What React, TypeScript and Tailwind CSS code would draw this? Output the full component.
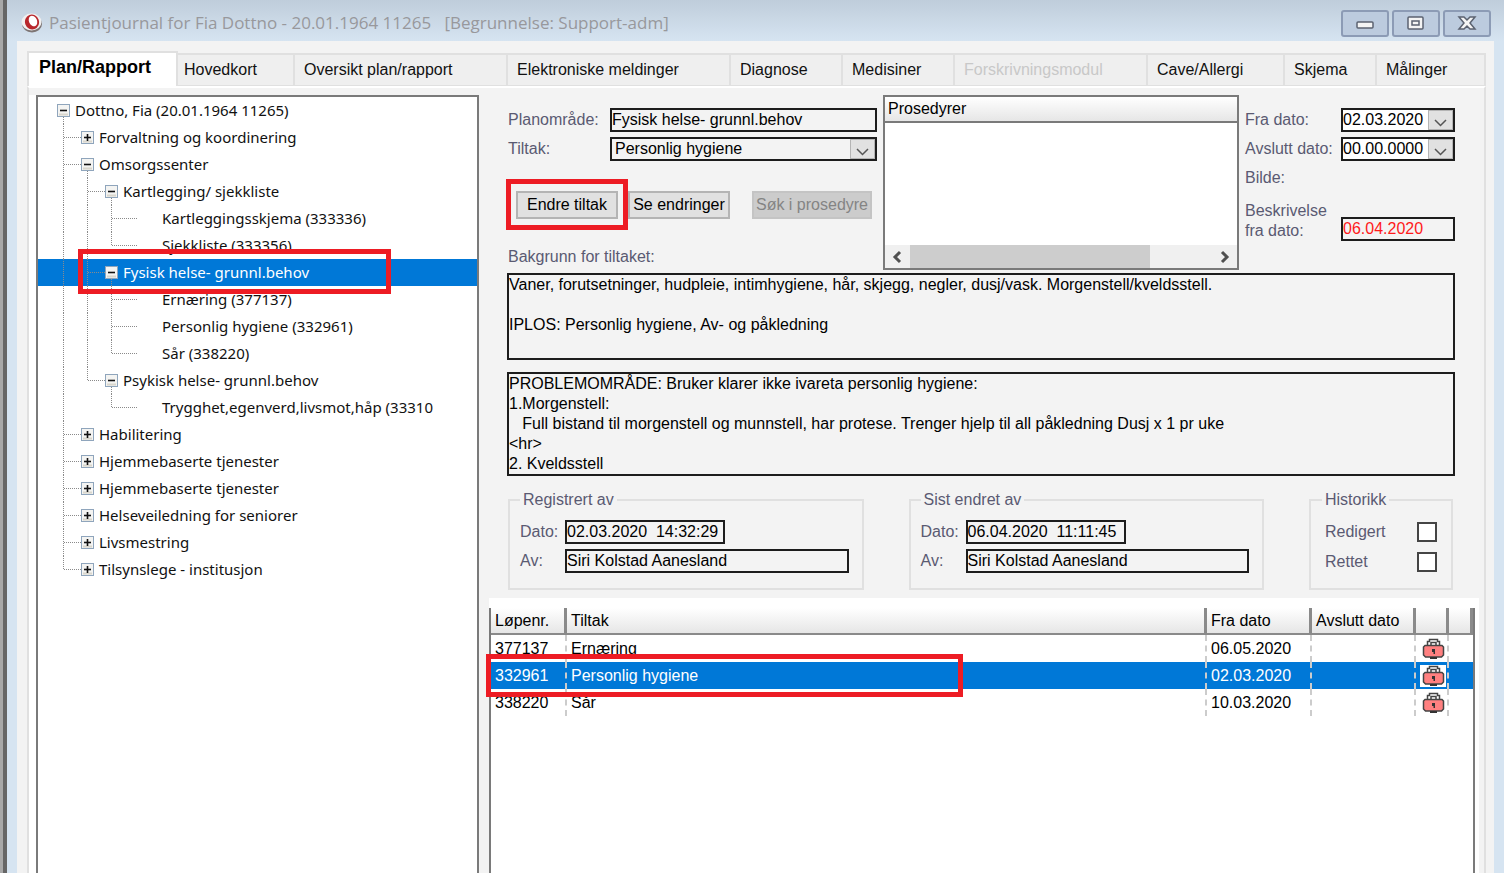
import React from "react";

type Guide = "line" | "tee" | "last" | "blank";

type Node = {
  label: string;
  guides: Guide[];
  state: "open" | "closed" | "leaf";
  selected?: boolean;
};

const TREE: Node[] = [
  { label: "Dottno, Fia (20.01.1964 11265)", guides: [], state: "open" },
  { label: "Forvaltning og koordinering", guides: ["tee"], state: "closed" },
  { label: "Omsorgssenter", guides: ["tee"], state: "open" },
  { label: "Kartlegging/ sjekkliste", guides: ["line", "tee"], state: "open" },
  { label: "Kartleggingsskjema (333336)", guides: ["line", "line", "tee"], state: "leaf" },
  { label: "Sjekkliste (333356)", guides: ["line", "line", "last"], state: "leaf" },
  { label: "Fysisk helse- grunnl.behov", guides: ["line", "tee"], state: "open", selected: true },
  { label: "Ernæring (377137)", guides: ["line", "line", "tee"], state: "leaf" },
  { label: "Personlig hygiene (332961)", guides: ["line", "line", "tee"], state: "leaf" },
  { label: "Sår (338220)", guides: ["line", "line", "last"], state: "leaf" },
  { label: "Psykisk helse- grunnl.behov", guides: ["line", "last"], state: "open" },
  { label: "Trygghet,egenverd,livsmot,håp (33310", guides: ["line", "blank", "last"], state: "leaf" },
  { label: "Habilitering", guides: ["tee"], state: "closed" },
  { label: "Hjemmebaserte tjenester", guides: ["tee"], state: "closed" },
  { label: "Hjemmebaserte tjenester", guides: ["tee"], state: "closed" },
  { label: "Helseveiledning for seniorer", guides: ["tee"], state: "closed" },
  { label: "Livsmestring", guides: ["tee"], state: "closed" },
  { label: "Tilsynslege - institusjon", guides: ["last"], state: "closed" },
];

const TABS = [
  { label: "Hovedkort", size: "basis-[117px] pl-[6px]" },
  { label: "Oversikt plan/rapport", size: "basis-[213px] pl-[9px]" },
  { label: "Elektroniske meldinger", size: "basis-[223px] pl-[9px]" },
  { label: "Diagnose", size: "basis-[112px] pl-[9px]" },
  { label: "Medisiner", size: "basis-[112px] pl-[9px]" },
  { label: "Forskrivningsmodul", size: "basis-[193px] pl-[9px]", disabled: true },
  { label: "Cave/Allergi", size: "basis-[137px] pl-[9px]" },
  { label: "Skjema", size: "basis-[92px] pl-[9px]" },
  { label: "Målinger", size: "basis-[109px] pl-[9px]" },
];

const ROWS = [
  { nr: "377137", tiltak: "Ernæring", fra: "06.05.2020" },
  { nr: "332961", tiltak: "Personlig hygiene", fra: "02.03.2020", selected: true },
  { nr: "338220", tiltak: "Sår", fra: "10.03.2020" },
];

const BACKGROUND = `Vaner, forutsetninger, hudpleie, intimhygiene, hår, skjegg, negler, dusj/vask. Morgenstell/kveldsstell.

IPLOS: Personlig hygiene, Av- og påkledning`;

const PROBLEM = `PROBLEMOMRÅDE: Bruker klarer ikke ivareta personlig hygiene:
1.Morgenstell:
   Full bistand til morgenstell og munnstell, har protese. Trenger hjelp til all påkledning Dusj x 1 pr uke
<hr>
2. Kveldsstell`;

const FIELD = "block h-6 border-2 border-[#1c1c1c] text-black outline-none";
const LABEL = "text-[#5a5a72]";

function GuideCell({ kind, long }: { kind: Guide; long: boolean }) {
  return (
    <svg width="24" height="27" className="shrink-0 overflow-visible" stroke="#8a8a8a" strokeDasharray="1 1">
      {(kind === "line" || kind === "tee") && <path d="M12.5 0V27" />}
      {kind === "last" && <path d="M12.5 0V14" />}
      {(kind === "tee" || kind === "last") && <path d={long ? "M13 13.5H38" : "M13 13.5H30"} />}
    </svg>
  );
}

function Toggle({ open }: { open: boolean }) {
  return (
    <button aria-label={open ? "Lukk" : "Åpne"} className="h-[27px] w-6 shrink-0">
      <svg width="24" height="27">
        {open && <path d="M12.5 20V27" stroke="#8a8a8a" strokeDasharray="1 1" />}
        <rect x="6.5" y="7.5" width="12" height="12" fill="#f4f4f2" stroke="#8fa5bc" />
        <path d="M8 17.5H17" stroke="#d9d6cd" strokeWidth="2" />
        <path d="M9 13.5H16" stroke="#111" strokeWidth="1.6" />
        {!open && <path d="M12.5 10V17" stroke="#111" strokeWidth="1.6" />}
      </svg>
    </button>
  );
}

function TreeRow({ node }: { node: Node }) {
  const leaf = node.state === "leaf";
  return (
    <li
      className={`relative flex h-[27px] items-center pl-[13px] ${
        node.selected ? "bg-[#0078d7] text-white" : "text-[#111]"
      }`}
    >
      {node.guides.map((g, i) => (
        <GuideCell key={i} kind={g} long={leaf} />
      ))}
      {!leaf && <Toggle open={node.state === "open"} />}
      <span className={`whitespace-nowrap ${leaf ? "pl-[39px]" : ""}`}>{node.label}</span>
      {node.selected && (
        <div className="absolute -top-[10px] left-[40px] z-10 h-[45px] w-[313px] border-5 border-[#ed1c24]" />
      )}
    </li>
  );
}

function Chevron() {
  return (
    <span className="pointer-events-none absolute inset-y-[2px] right-[2px] flex w-[25px] items-center justify-center border border-[#b4b4b4] bg-[#e1e1e1] pt-[5px]">
      <svg width="13" height="8" fill="none" stroke="#555" strokeWidth="1.5">
        <path d="M1 1L6.5 6.5L12 1" />
      </svg>
    </span>
  );
}

function DateSelect({ id, value }: { id: string; value: string }) {
  return (
    <div className="relative">
      <select id={id} className={`${FIELD} w-full appearance-none bg-white leading-5`}>
        <option>{value}</option>
      </select>
      <Chevron />
    </div>
  );
}

function WindowButton({ label, children }: { label: string; children: React.ReactNode }) {
  return (
    <button
      aria-label={label}
      className="flex h-[27px] w-12 items-center justify-center rounded-[3px] border-2 border-[#8c9bb5] bg-[#bccbde]"
    >
      <svg width="20" height="16" fill="#f4f4f4" stroke="#5b6270" strokeWidth="1.5">
        {children}
      </svg>
    </button>
  );
}

function Lock() {
  return (
    <svg width="26" height="22" viewBox="0 0 26 22" className="bg-white">
      <path d="M7.5 8V3.500H9.500V1.500H17.500V3.500H19.500V8" fill="#fff" stroke="#444" strokeWidth="1.5" />
      <path d="M11 8V4.500H16V8" fill="#fff" stroke="#444" strokeWidth="1.5" />
      <path d="M5 7.500H22L23.500 9V17L21.500 19H5.500L3.500 17V9Z" fill="#ff8080" stroke="#444" strokeWidth="1.5" />
      <path d="M10 20H17" stroke="#333" strokeWidth="2" />
      <path d="M12 11H15V16H13.500V14H12Z" fill="#333" />
    </svg>
  );
}

type SignedByProps = {
  title: string;
  id: string;
  date: string;
  name: string;
};

function SignedBy({ title, id, date, name }: SignedByProps) {
  return (
    <fieldset className="h-[100px] min-w-0 flex-1 border-2 border-[#e0e0e0] pl-[10px]">
      <legend className={`px-[3px] leading-5 ${LABEL}`}>{title}</legend>
      <div className="grid grid-cols-[45px_1fr] gap-y-[5px] pt-[10px] pr-[13px]">
        <label htmlFor={`${id}-dato`} className={`leading-6 ${LABEL}`}>Dato:</label>
        <input id={`${id}-dato`} readOnly value={date} className={`${FIELD} w-[160px]`} />
        <label htmlFor={`${id}-av`} className={`leading-6 ${LABEL}`}>Av:</label>
        <input id={`${id}-av`} readOnly value={name} className={`${FIELD} w-full`} />
      </div>
    </fieldset>
  );
}

const HEAD = "border-r-[3px] border-b-2 border-[#8a8a8a] pl-1 text-left font-normal bg-linear-to-b from-white to-[#e6e6e6]";
const CELL = "border-r-2 border-dashed border-[#cccccc] pl-1";

export default function App() {
  return (
    <div className="flex h-screen overflow-hidden bg-[#d6e4f1] font-['Liberation_Sans',Arial,sans-serif] text-base">
      <div className="w-[7px] shrink-0 border-r-4 border-[#666] bg-[#a8a8a8]" />
      <div className="flex min-w-0 flex-1 flex-col">
        <header className="flex h-[41px] shrink-0 items-center bg-linear-to-b from-[#bfcddb] to-[#d6e4f1] pt-[5px] pr-[13px] pl-[14px]">
          <svg width="22" height="20" viewBox="0 0 22 20">
            <ellipse cx="11" cy="11" rx="10" ry="8.500" fill="#7d7574" />
            <ellipse cx="10.500" cy="9" rx="10" ry="8.500" fill="#f1efef" />
            <ellipse cx="11" cy="9" rx="7" ry="7.500" fill="#b8262b" transform="rotate(-20 11 9)" />
            <ellipse cx="12" cy="8" rx="4" ry="5.500" fill="#fff" transform="rotate(-25 12 8)" />
          </svg>
          <h1 className="flex-1 pl-[6px] font-['Open_Sans','Noto_Sans',sans-serif] text-[17px] whitespace-pre text-[#98989c]">
            {"Pasientjournal for Fia Dottno - 20.01.1964 11265   [Begrunnelse: Support-adm]"}
          </h1>
          <div className="flex gap-[3px]">
            <WindowButton label="Minimer">
              <rect x="2" y="7" width="16" height="6" rx="1" />
            </WindowButton>
            <WindowButton label="Maksimer">
              <rect x="2" y="2" width="15" height="12" rx="1" />
              <rect x="6" y="6" width="7" height="4" />
            </WindowButton>
            <WindowButton label="Lukk">
              <path d="M2 2H7L10 5L13 2H18L13 8L18 14H13L10 11L7 14H2L7 8Z" />
            </WindowButton>
          </div>
        </header>

        <div className="mr-[10px] ml-[10px] flex min-h-0 flex-1 flex-col bg-[#f3f3f3] pt-[10px] pr-2 pl-[10px]">
          <nav className="flex shrink-0 items-end">
            <button className="h-[35px] w-[151px] shrink-0 border-2 border-b-0 border-[#e0e0e0] bg-white pb-[6px] pl-[10px] text-left text-lg font-bold text-black">
              Plan/Rapport
            </button>
            {TABS.map((t) => (
              <button
                key={t.label}
                disabled={t.disabled}
                className={`h-[33px] shrink grow border-t-2 border-r-2 border-b border-[#e0e0e0] bg-[#efefef] text-left whitespace-nowrap ${t.size} ${
                  t.disabled ? "text-[#c8c8c8]" : "text-[#111]"
                }`}
              >
                {t.label}
              </button>
            ))}
          </nav>

          <main className="flex min-h-0 flex-1 border-x-2 border-t-2 border-[#e0e0e0] border-t-white pt-[7px] pr-[5px]">
            <div className="w-[7px] shrink-0 bg-white" />
            <ul className="w-[443px] shrink-0 overflow-hidden border-2 border-b-0 border-[#7a7a7a] bg-white font-['Noto_Sans','Open_Sans',sans-serif] text-[15px]">
              {TREE.map((n, i) => (
                <TreeRow key={i} node={n} />
              ))}
            </ul>

            <section className="ml-[10px] flex min-w-0 flex-1 flex-col">
              <div className="pr-6 pl-[18px]">
                <div className="flex gap-[6px]">
                  <div className="w-[370px] shrink-0 pt-[13px]">
                    <div className="grid grid-cols-[102px_1fr] gap-y-[5px] pl-[1px]">
                      <label htmlFor="plan" className={`leading-6 ${LABEL}`}>Planområde:</label>
                      <input id="plan" readOnly value="Fysisk helse- grunnl.behov" className={`${FIELD} w-full`} />
                      <label htmlFor="tiltak" className={`leading-6 ${LABEL}`}>Tiltak:</label>
                      <div className="relative">
                        <select id="tiltak" className={`${FIELD} w-full appearance-none pl-[3px] leading-5`}>
                          <option>Personlig hygiene</option>
                        </select>
                        <Chevron />
                      </div>
                    </div>
                    <div className="flex gap-[10px] pt-[30px] pl-[9px]">
                      <div className="relative">
                        <button className="block h-7 w-[102px] border-2 border-[#b4b4b4] bg-[#e1e1e1] text-black">Endre tiltak</button>
                        <div className="pointer-events-none absolute -inset-x-[10px] -top-3 -bottom-[11px] border-5 border-[#ed1c24]" />
                      </div>
                      <button className="h-7 w-[102px] border-2 border-[#b4b4b4] bg-[#e1e1e1] whitespace-nowrap text-black">Se endringer</button>
                      <button disabled className="ml-3 h-7 w-[120px] border-2 border-[#c4c4c4] bg-[#cccccc] whitespace-nowrap text-[#848484]">
                        Søk i prosedyre
                      </button>
                    </div>
                    <label htmlFor="bakgrunn" className={`block pt-[26px] pl-[1px] leading-6 ${LABEL}`}>Bakgrunn for tiltaket:</label>
                  </div>

                  <div className="flex h-[175px] min-w-0 flex-1 flex-col border-2 border-[#7a7a7a] bg-white">
                    <div className="h-[26px] border-b-2 border-[#7a7a7a] bg-linear-to-b from-white to-[#e6e6e6] pl-[3px] text-black">Prosedyrer</div>
                    <div className="flex-1" />
                    <div className="flex h-[23px] items-center bg-[#f0f0f0]">
                      <svg width="25" height="14" fill="none" stroke="#505050" strokeWidth="3"><path d="M15 2L10 7L15 12" /></svg>
                      <div className="h-full w-[240px] bg-[#cdcdcd]" />
                      <svg width="25" height="14" className="ml-auto" fill="none" stroke="#505050" strokeWidth="3"><path d="M10 2L15 7L10 12" /></svg>
                    </div>
                  </div>

                  <div className="grid w-[210px] shrink-0 grid-cols-[96px_1fr] content-start gap-y-[5px] pt-[13px]">
                    <label htmlFor="fra" className={`leading-6 ${LABEL}`}>Fra dato:</label>
                    <DateSelect id="fra" value="02.03.2020" />
                    <label htmlFor="avslutt" className={`leading-6 whitespace-nowrap ${LABEL}`}>Avslutt dato:</label>
                    <DateSelect id="avslutt" value="00.00.0000" />
                    <span className={`col-span-2 leading-6 ${LABEL}`}>Bilde:</span>
                    <label htmlFor="beskrivelse" className={`pt-[6px] leading-5 ${LABEL}`}>Beskrivelse fra dato:</label>
                    <input id="beskrivelse" readOnly value="06.04.2020" className="h-6 w-full self-end border-2 border-[#1c1c1c] text-[#ff1a1a] outline-none" />
                  </div>
                </div>

                <textarea id="bakgrunn" readOnly value={BACKGROUND} className="mt-[3px] block h-[87px] w-full resize-none overflow-hidden border-2 border-[#1c1c1c] leading-5 text-black outline-none" />
                <textarea aria-label="Beskrivelse" readOnly value={PROBLEM} className="mt-3 block h-[104px] w-full resize-none overflow-hidden border-2 border-[#1c1c1c] leading-5 text-black outline-none" />

                <div className="flex gap-[45px] pt-[14px] pr-[2px] pl-[1px]">
                  <SignedBy title="Registrert av" id="reg" date="02.03.2020  14:32:29" name="Siri Kolstad Aanesland" />
                  <SignedBy title="Sist endret av" id="endret" date="06.04.2020  11:11:45" name="Siri Kolstad Aanesland" />
                  <fieldset className="h-[100px] w-[144px] border-2 border-[#e0e0e0] pr-[14px] pl-[11px]">
                    <legend className={`px-[3px] leading-5 ${LABEL}`}>Historikk</legend>
                    <div className="flex flex-col gap-[6px] pt-[10px] pl-[3px]">
                      {["Redigert", "Rettet"].map((l) => (
                        <label key={l} className={`flex items-center justify-between leading-6 ${LABEL}`}>
                          {l}
                          <input type="checkbox" className="size-5 appearance-none border-2 border-[#444] bg-white" />
                        </label>
                      ))}
                    </div>
                  </fieldset>
                </div>
              </div>

              <div className="mt-2 flex-1 bg-white pt-[10px] pr-1">
                <div className="h-full border-x-2 border-[#7a7a7a]">
                  <table className="w-full table-fixed border-separate border-spacing-0 text-black">
                    <colgroup>
                      <col className="w-[76px]" />
                      <col />
                      <col className="w-[105px]" />
                      <col className="w-[104px]" />
                      <col className="w-[33px]" />
                      <col className="w-[24px]" />
                    </colgroup>
                    <thead>
                      <tr className="h-[27px]">
                        <th className={HEAD}>Løpenr.</th>
                        <th className={HEAD}>Tiltak</th>
                        <th className={HEAD}>Fra dato</th>
                        <th className={`${HEAD} whitespace-nowrap`}>Avslutt dato</th>
                        <th className={HEAD} />
                        <th className={HEAD} />
                      </tr>
                    </thead>
                    <tbody>
                      {ROWS.map((r) => (
                        <tr key={r.nr} className={`h-[27px] ${r.selected ? "bg-[#0078d7] text-white" : ""}`}>
                          <td className={`relative ${CELL}`}>
                            {r.nr}
                            {r.selected && (
                              <div className="absolute -top-2 -left-[5px] z-10 h-[43px] w-[477px] border-5 border-[#ed1c24]" />
                            )}
                          </td>
                          <td className={CELL}>{r.tiltak}</td>
                          <td className={CELL}>{r.fra}</td>
                          <td className={CELL} />
                          <td className={CELL}><Lock /></td>
                          <td />
                        </tr>
                      ))}
                    </tbody>
                  </table>
                </div>
              </div>
            </section>
          </main>
        </div>
      </div>
    </div>
  );
}
